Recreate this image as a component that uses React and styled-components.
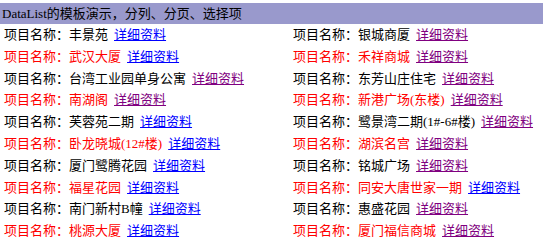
import React from 'react';
import styled, { createGlobalStyle } from 'styled-components';

const GlobalStyle = createGlobalStyle`
  body {
    margin: 0;
    background: #ffffff;
    font-family: "Liberation Serif", "Noto Sans CJK SC", serif;
    font-size: 13px;
  }
`;

const Page = styled.div`
  padding-top: 3px;
`;

const Header = styled.div`
  height: 21px;
  line-height: 21px;
  padding-left: 2px;
  background: #9999cc;
  color: #000000;
  white-space: nowrap;
`;

const List = styled.div`
  display: grid;
  grid-template-columns: 289px 1fr;
`;

const Item = styled.div`
  height: 21.8px;
  line-height: 22px;
  padding-left: 4px;
  white-space: nowrap;
  color: ${p => (p.$alt ? '#ff0000' : '#000000')};
`;

const Detail = styled.a`
  margin-left: 6px;
  color: ${p => (p.$visited ? '#800080' : '#0000ff')};
  text-decoration: underline;
  cursor: pointer;
`;

// left column then right column, row by row
const rows = [
  [['丰景苑', false], ['银城商厦', true]],
  [['武汉大厦', false], ['禾祥商城', true]],
  [['台湾工业园单身公寓', true], ['东芳山庄住宅', true]],
  [['南湖阁', true], ['新港广场(东楼)', true]],
  [['芙蓉苑二期', false], ['鹭景湾二期(1#-6#楼)', true]],
  [['卧龙晓城(12#楼)', false], ['湖滨名宫', true]],
  [['厦门鹭腾花园', false], ['铭城广场', true]],
  [['福星花园', false], ['同安大唐世家一期', false]],
  [['南门新村B幢', false], ['惠盛花园', true]],
  [['桃源大厦', false], ['厦门福信商城', true]],
];

const App = () => {
  return (
    <Page>
      <GlobalStyle />
      <Header>DataList的模板演示，分列、分页、选择项</Header>
      <List>
        {rows.map((row, i) =>
          row.map(([name, visited], j) => (
            <Item key={`${i}-${j}`} $alt={i % 2 === 1}>
              项目名称：{name}
              <Detail $visited={visited}>详细资料</Detail>
            </Item>
          ))
        )}
      </List>
    </Page>
  );
};

export default App;
